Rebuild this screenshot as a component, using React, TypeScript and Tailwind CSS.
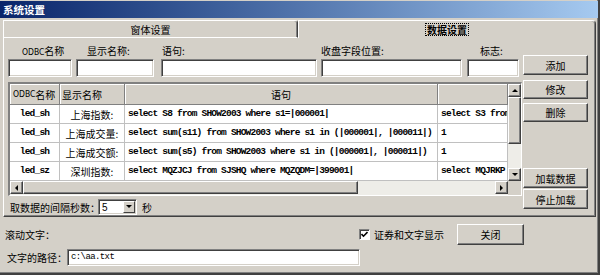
import React from 'react';

const rows = [
  {
    odbc: 'led_sh',
    name: '上海指数:',
    sql: 'select S8 from SHOW2003 where s1=|000001|',
    extra: 'select S3 from',
  },
  {
    odbc: 'led_sh',
    name: '上海成交量:',
    sql: 'select sum(s11) from SHOW2003 where s1 in (|000001|, |000011|)',
    extra: '1',
  },
  {
    odbc: 'led_sh',
    name: '上海成交额:',
    sql: 'select sum(s5) from SHOW2003 where s1 in (|000001|, |000011|)',
    extra: '1',
  },
  {
    odbc: 'led_sz',
    name: '深圳指数:',
    sql: 'select MQZJCJ from SJSHQ where MQZQDM=|399001|',
    extra: 'select MQJRKP',
  },
];

const narrow = "font-['DejaVu_Sans_Condensed','Liberation_Sans',sans-serif] text-[8.5px]";

function Btn({ children, className = '' }: { children: React.ReactNode; className?: string }) {
  return (
    <div
      className={`flex items-center justify-center bg-[#d4d0c8] border border-t-white border-l-white border-r-[#404040] border-b-[#404040] shadow-[inset_-1px_-1px_0_#808080] text-[10px] text-black ${className}`}
    >
      {children}
    </div>
  );
}

function Sunken({ children, className = '' }: { children?: React.ReactNode; className?: string }) {
  return (
    <div
      className={`bg-white border border-t-[#808080] border-l-[#808080] border-r-white border-b-white shadow-[inset_1px_1px_0_#404040,inset_-1px_-1px_0_#d4d0c8] ${className}`}
    >
      {children}
    </div>
  );
}

function Arrow({ dir }: { dir: 'up' | 'down' | 'left' | 'right' }) {
  const pts = {
    up: '1,5 4,2 7,5',
    down: '1,2 4,5 7,2',
    left: '5,1 2,4 5,7',
    right: '2,1 5,4 2,7',
  }[dir];
  return (
    <svg width="8" height="8" viewBox="0 0 8 8">
      <polygon points={pts} fill="black" />
    </svg>
  );
}

function ScrollBtn({ dir }: { dir: 'up' | 'down' | 'left' | 'right' }) {
  return (
    <div className="w-[13px] h-[13px] flex items-center justify-center bg-[#d4d0c8] border border-t-white border-l-white border-r-[#404040] border-b-[#404040] shadow-[inset_-1px_-1px_0_#808080] shrink-0">
      <Arrow dir={dir} />
    </div>
  );
}

function Field({ label, width, labelClass }: { label: React.ReactNode; width: string; labelClass: string }) {
  return (
    <div className={`flex flex-col ${width}`}>
      <div className={`h-[12px] leading-[12px] text-[10px] whitespace-nowrap ${labelClass}`}>{label}</div>
      <Sunken className="h-[18px] mt-[2px]" />
    </div>
  );
}

function Grid() {
  const cell = 'h-[19px] border-r border-b border-[#c0c0c0] bg-white flex items-center overflow-hidden whitespace-nowrap';
  const mono = "font-['Liberation_Mono',monospace] font-bold text-[9.5px] tracking-[-0.8px]";
  const head = 'h-[21px] bg-[#d4d0c8] border-r border-b border-[#808080] shadow-[inset_1px_1px_0_white] flex items-center text-[10px] whitespace-nowrap';
  return (
    <div className="w-[514px] h-[114px] border-t-2 border-l-2 border-t-[#808080] border-l-[#808080] border-r border-b border-r-white border-b-white flex flex-col bg-[#d4d0c8]">
      <div className="flex">
        <div className="w-[498px] flex flex-col">
          <div className="flex">
            <div className={`${head} w-[50px] pl-[3px]`}>
              <span className={narrow}>ODBC</span>名称
            </div>
            <div className={`${head} w-[65px] pl-[2px]`}>显示名称</div>
            <div className={`${head} w-[313px] justify-center`}>语句</div>
            <div className={`${head} w-[70px]`} />
          </div>
          {rows.map((r, i) => (
            <div key={i} className="flex">
              <div className={`${cell} w-[50px] justify-center ${mono}`}>{r.odbc}</div>
              <div className={`${cell} w-[65px] justify-center text-[10px]`}>{r.name}</div>
              <div className={`${cell} w-[313px] pl-[3px] ${mono}`}>{r.sql}</div>
              <div className={`${cell} w-[70px] pl-[3px] ${mono}`}>{r.extra}</div>
            </div>
          ))}
        </div>
        <div className="w-[13px] h-[97px] flex flex-col bg-[#eeede8]">
          <ScrollBtn dir="up" />
          <div className="h-[47px] bg-[#d4d0c8] border border-t-white border-l-white border-r-[#404040] border-b-[#404040] shadow-[inset_-1px_-1px_0_#808080]" />
          <div className="flex-1" />
          <ScrollBtn dir="down" />
        </div>
      </div>
      <div className="flex h-[14px]">
        <div className="w-[498px] flex bg-[#eeede8] items-start">
          <ScrollBtn dir="left" />
          <div className="w-[335px] h-[13px] bg-[#d4d0c8] border border-t-white border-l-white border-r-[#404040] border-b-[#404040] shadow-[inset_-1px_-1px_0_#808080]" />
          <div className="flex-1" />
          <ScrollBtn dir="right" />
        </div>
        <div className="w-[13px] bg-[#d4d0c8]" />
      </div>
    </div>
  );
}

export default function App() {
  return (
    <div className="w-[600px] h-[275px] bg-[#d4d0c8] flex flex-col border-r-2 border-b-2 border-r-[#404040] border-b-[#404040] shadow-[inset_-1px_-1px_0_#808080] text-black font-['SimSun','Noto_Sans_CJK_SC',sans-serif] overflow-hidden">
      {/* title bar */}
      <div className="mt-[1px] h-[17px] bg-gradient-to-r from-[#0a246a] to-[#a6caf0] flex items-center pl-[3px] text-white text-[10.5px] font-bold">
        系统设置
      </div>

      {/* tabs */}
      <div className="mt-[2px] ml-[3px] mr-[2px] h-[18px] flex">
        <div className="w-[295px] flex items-center justify-center border-t border-l border-b border-t-white border-l-white border-b-white border-r border-r-[#404040] rounded-tr-[3px] shadow-[inset_-1px_0_0_#808080] text-[10px]">
          窗体设置
        </div>
        <div className="flex-1 flex items-center justify-center border-t border-l border-t-white border-l-white border-r border-r-[#404040] rounded-tr-[4px] shadow-[inset_-1px_0_0_#808080] text-[10px]">
          <span className="font-bold outline-1 outline-dotted outline-black px-[1px] leading-[11px]">数据设置</span>
        </div>
      </div>

      {/* tab panel */}
      <div className="ml-[3px] mr-[2px] h-[179px] border-l border-l-white border-r border-b border-r-[#404040] border-b-[#404040] shadow-[inset_-1px_-1px_0_#808080] flex pl-[4px]">
        <div className="w-[514px] flex flex-col pt-[7px]">
          <div className="flex">
            <Field
              label={
                <>
                  <span className={narrow}>ODBC</span>名称
                </>
              }
              width="w-[64px]"
              labelClass="pl-[14px]"
            />
            <div className="w-[4px]" />
            <Field label="显示名称:" width="w-[78px]" labelClass="pl-[11px]" />
            <div className="w-[7px]" />
            <Field label="语句:" width="w-[156px]" labelClass="pl-[1px]" />
            <div className="w-[4px]" />
            <Field label="收盘字段位置:" width="w-[141px]" labelClass="" />
            <div className="w-[5px]" />
            <Field label="标志:" width="w-[52px]" labelClass="pl-[13px]" />
          </div>
          <div className="mt-[5px]">
            <Grid />
          </div>
          <div className="mt-[3px] flex items-center h-[16px] pl-[2px] text-[10px]">
            <span className="w-[88px] whitespace-nowrap">取数据的间隔秒数：</span>
            <Sunken className="w-[39px] h-[16px] flex items-center pl-[3px] pr-[1px]">
              <span className="flex-1 text-[10px] font-['Liberation_Sans',sans-serif]">5</span>
              <div className="w-[12px] h-[12px] flex items-center justify-center bg-[#d4d0c8] border border-t-white border-l-white border-r-[#404040] border-b-[#404040]">
                <Arrow dir="down" />
              </div>
            </Sunken>
            <span className="ml-[5px]">秒</span>
          </div>
        </div>

        <div className="ml-[1px] w-[65px] flex flex-col">
          <Btn className="mt-[17px] h-[20px]">添加</Btn>
          <Btn className="mt-[5px] h-[19px]">修改</Btn>
          <Btn className="mt-[4px] h-[19px]">删除</Btn>
          <Btn className="mt-[46px] h-[20px]">加载数据</Btn>
          <Btn className="mt-[1px] h-[20px]">停止加载</Btn>
        </div>
      </div>

      {/* bottom */}
      <div className="mt-[7px] h-[21px] flex items-center text-[10px]">
        <span className="ml-[5px] w-[354px]">滚动文字：</span>
        <div className="w-[11px] h-[11px] bg-white border border-t-[#808080] border-l-[#808080] border-r-white border-b-white shadow-[inset_1px_1px_0_#404040] flex items-center justify-center">
          <svg width="7" height="7" viewBox="0 0 7 7">
            <polyline points="0.5,3 2.5,5.2 6.5,1" fill="none" stroke="black" strokeWidth="1.6" />
          </svg>
        </div>
        <span className="ml-[4px] w-[83px] whitespace-nowrap">证券和文字显示</span>
        <Btn className="w-[67px] h-[21px]">关闭</Btn>
      </div>
      <div className="mt-[4px] h-[17px] flex items-center text-[10px]">
        <span className="ml-[7px] w-[60px] whitespace-nowrap">文字的路径：</span>
        <Sunken className="w-[293px] h-[17px] flex items-center pl-[3px]">
          <span className="font-['Liberation_Mono',monospace] text-[9px] tracking-[-0.6px]">c:\aa.txt</span>
        </Sunken>
      </div>
    </div>
  );
}
